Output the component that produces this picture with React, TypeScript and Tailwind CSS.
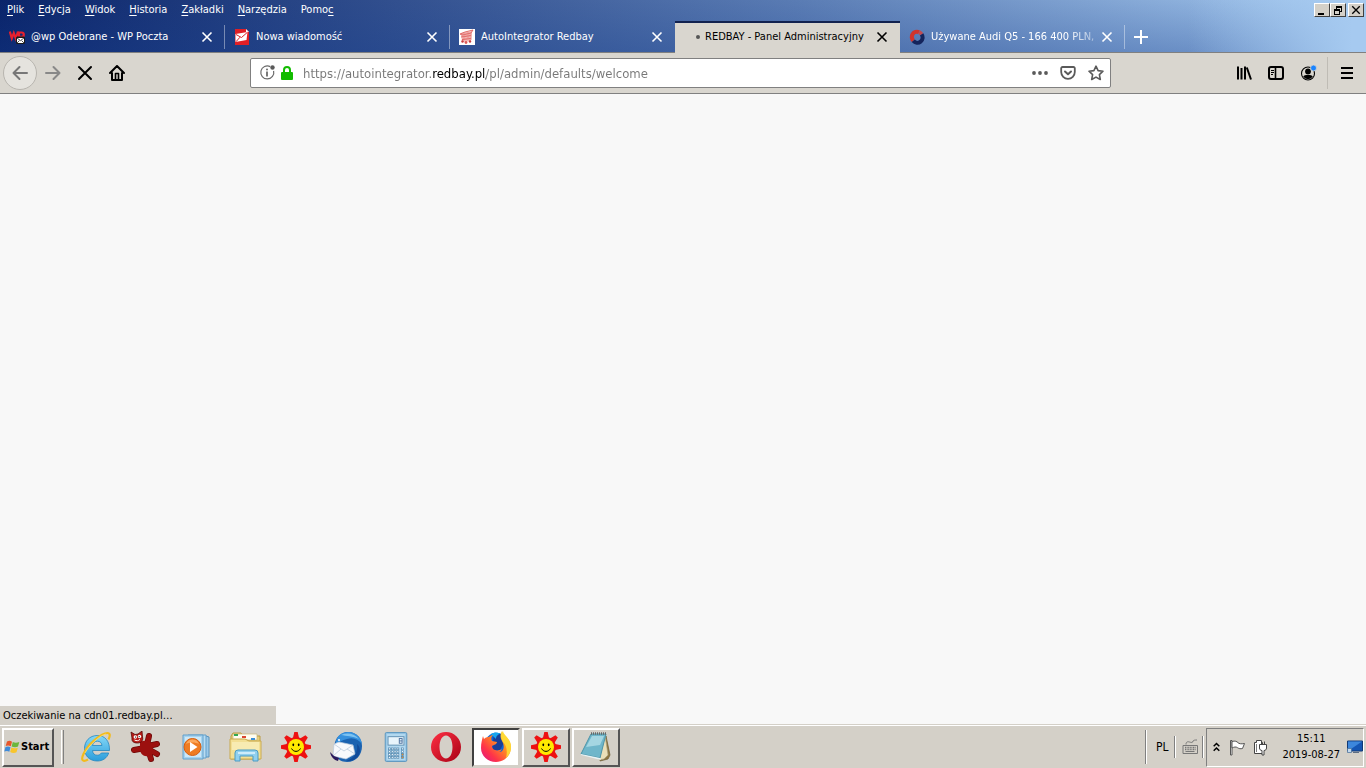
import React from 'react';
import clsx from 'clsx';

const MENU = [
  { before: '', key: 'P', after: 'lik' },
  { before: '', key: 'E', after: 'dycja' },
  { before: '', key: 'W', after: 'idok' },
  { before: '', key: 'H', after: 'istoria' },
  { before: '', key: 'Z', after: 'akładki' },
  { before: '', key: 'N', after: 'arzędzia' },
  { before: 'Pomo', key: 'c', after: '' },
];

const CloseIcon = ({ size = 12 }: { size?: number }) => (
  <svg width={size} height={size} viewBox="0 0 12 12" stroke="currentColor" strokeWidth="1.6" fill="none">
    <path d="M1.5 1.5l9 9M10.5 1.5l-9 9" />
  </svg>
);

/* ---------- tab favicons ---------- */

const WpIcon = () => (
  <svg width="16" height="16" viewBox="0 0 16 16">
    <path d="M.8 2.500L2.800 9.300L4.800 4L6.800 9.300L9 2.500" fill="none" stroke="#e8202e" strokeWidth="2.200" />
    <path d="M10 10V3.500h2.600a2.200 2.200 0 0 1 0 4.400H10" fill="none" stroke="#e8202e" strokeWidth="2.200" />
    <rect x="7" y="7.500" width="9" height="7.500" rx="1.500" fill="#1a1a1a" />
    <path d="M8 9h7v5H8z" fill="#fff" />
    <path d="M8 9l3.500 2.600L15 9M8 14l2.400-2.400M15 14l-2.400-2.400" fill="none" stroke="#222" strokeWidth=".8" />
  </svg>
);

const MailIcon = () => (
  <svg width="16" height="16" viewBox="0 0 16 16">
    <path d="M1 0h11l3 3v13H1z" fill="#e01f26" />
    <path d="M12 0l3 3h-3z" fill="#fff" />
    <path d="M1.500 5L13.500 3L12.500 11L1.500 13z" fill="#fff" />
    <path d="M2 5.500L7.500 8.500L13.300 3.400M2 12.700L6 8.200" fill="none" stroke="#e01f26" strokeWidth="1" />
  </svg>
);

const RedbayIcon = () => (
  <svg width="16" height="16" viewBox="0 0 16 16">
    <path d="M0 0h16v16H0z" fill="#fff" />
    <path d="M2 4l11-2-1 10-9 1z" fill="#f3b4b2" />
    <path d="M1 5l5-2 8-2-2 3-9 2zM2 8l10-1.500M3 10.500l9-1" fill="none" stroke="#dc5a58" strokeWidth=".9" />
    <path d="M5 4v6M9 3v7M12 3v8" stroke="#e88987" strokeWidth=".8" />
    <circle cx="3.500" cy="12.500" r="1.200" fill="#c93a3c" />
    <circle cx="11" cy="12.500" r="1.200" fill="#c93a3c" />
    <circle cx="7" cy="13.500" r="1.400" fill="#dc5a58" />
  </svg>
);

const RingIcon = () => (
  <svg width="16" height="16" viewBox="0 0 16 16" fill="none" strokeWidth="4">
    <path d="M4.300 11.700A5.200 5.200 0 0 1 10 3.200" stroke="#d0342c" />
    <path d="M12.500 5.300A5.200 5.200 0 1 1 4.300 11.700" stroke="#14245c" />
    <path d="M10 3.200A5.200 5.200 0 0 1 12.500 5.300" stroke="#c04a50" />
  </svg>
);

const tabs = [
  { title: '@wp Odebrane - WP Poczta', icon: <WpIcon /> },
  { title: 'Nowa wiadomość', icon: <MailIcon /> },
  { title: 'AutoIntegrator Redbay', icon: <RedbayIcon /> },
  { title: 'REDBAY - Panel Administracyjny', icon: null, active: true },
  { title: 'Używane Audi Q5 - 166 400 PLN,', icon: <RingIcon />, fade: true },
];

const windowButton =
  'flex h-[14px] w-4 items-center justify-center border border-white border-r-[#404040] border-b-[#404040] bg-[#d4d0c8]';

const MenuBar = () => (
  <div className="flex h-5 items-center justify-between pl-[7px] pr-[2px]">
    <nav className="flex gap-[14px]">
      {MENU.map((m) => (
        <button key={m.before + m.key + m.after} className="leading-4">
          {m.before}
          <span className="underline underline-offset-2">{m.key}</span>
          {m.after}
        </button>
      ))}
    </nav>
    <div className="flex text-black">
      <button aria-label="Minimalizuj" className={windowButton}>
        <svg width="12" height="11" viewBox="0 0 12 11"><path d="M2 8h6v2H2z" /></svg>
      </button>
      <button aria-label="Przywróć" className={windowButton}>
        <svg width="12" height="11" viewBox="0 0 12 11" fill="none" stroke="#000" shapeRendering="crispEdges">
          <path d="M4.500 4V1.500h5v4.500H8M4 2h6M2.500 4.500h5v4.500h-5zM2 5h6" />
        </svg>
      </button>
      <button aria-label="Zamknij" className={clsx('ml-[2px]', windowButton)}>
        <CloseIcon size={10} />
      </button>
    </div>
  </div>
);

const TabStrip = () => (
  <div className="flex h-[33px] items-stretch pt-px">
    {tabs.map((tab, i) => (
      <div
        key={tab.title}
        className={clsx(
          'flex min-w-0 max-w-[225px] flex-1 items-center',
          tab.active ? 'border-t-2 border-[#12224f] bg-[#d9d6cf] pb-[2px] text-black' : 'border-b border-[#808080]',
        )}
      >
        <button className="flex min-w-0 flex-1 items-center pl-[9px] text-left">
          {tab.active ? (
            <span className="ml-3 mr-[5px] flex w-1 shrink-0">
              <span className="size-1 rounded-full bg-[#555]" />
            </span>
          ) : (
            <span className="mr-[6px] shrink-0">{tab.icon}</span>
          )}
          <span
            className={clsx(
              'min-w-0 flex-1 overflow-hidden whitespace-nowrap leading-4',
              tab.fade && '[mask-image:linear-gradient(to_right,#000_80%,rgba(0,0,0,0.3))]',
            )}
          >
            {tab.title}
          </span>
        </button>
        <button aria-label="Zamknij kartę" className="mr-[11px] shrink-0">
          <CloseIcon />
        </button>
        <span className={clsx('h-6 w-px shrink-0', !tab.active && i !== 2 && 'bg-white/40')} />
      </div>
    ))}
    <div className="flex flex-1 items-center border-b border-[#808080] pl-[9px]">
      <button aria-label="Nowa karta">
        <svg width="14" height="14" viewBox="0 0 14 14" stroke="#fff" strokeWidth="2"><path d="M7 0v14M0 7h14" /></svg>
      </button>
    </div>
  </div>
);

const UrlBar = () => (
  <div className="flex h-[30px] w-[861px] min-w-0 shrink items-center rounded-[2px] border border-[#808080] bg-white pl-2 pr-[6px]">
    <svg width="18" height="18" viewBox="0 0 18 18" fill="none" stroke="#6a6a6a">
      <path d="M11.200 2.600A6.500 6.500 0 1 0 14.600 6.800" strokeWidth="1.200" />
      <path d="M8 7.500v5" strokeWidth="1.800" />
      <circle cx="8" cy="5.500" r="1" fill="#6a6a6a" stroke="none" />
      <circle cx="13.500" cy="3.500" r="2.200" fill="#5a5a5a" stroke="none" />
    </svg>
    <svg className="ml-1 shrink-0" width="12" height="14" viewBox="0 0 12 14">
      <path d="M3 7V4a3 3 0 0 1 6 0v3" fill="none" stroke="#12bc00" strokeWidth="2" />
      <rect y="6" width="12" height="8" rx="1" fill="#12bc00" />
    </svg>
    <input
      aria-label="Adres"
      defaultValue="https://autointegrator.redbay.pl/pl/admin/defaults/welcome"
      className="ml-[10px] h-5 min-w-0 flex-1 bg-[linear-gradient(to_right,#777_129px,#000_129px,#000_183px,#777_183px)] bg-clip-text text-[13px] text-transparent outline-none"
    />
    <div className="flex items-center gap-3 text-[#5a5a5a]">
      <button aria-label="Akcje strony">
        <svg width="16" height="16" viewBox="0 0 16 16" fill="currentColor">
          <circle cx="2" cy="8" r="1.900" /><circle cx="8" cy="8" r="1.900" /><circle cx="14" cy="8" r="1.900" />
        </svg>
      </button>
      <button aria-label="Pocket">
        <svg width="16" height="16" viewBox="0 0 16 16" fill="none" stroke="currentColor" strokeWidth="2" strokeLinecap="round" strokeLinejoin="round">
          <path d="M2.500 2h11a1.300 1.300 0 0 1 1.300 1.300V7a6.800 6.800 0 0 1-13.600 0V3.300A1.300 1.300 0 0 1 2.500 2z" strokeWidth="1.800" />
          <path d="M5 6.500l3 2.800 3-2.800" />
        </svg>
      </button>
      <button aria-label="Dodaj zakładkę">
        <svg width="16" height="16" viewBox="0 0 16 16" fill="none" stroke="currentColor" strokeWidth="1.600" strokeLinejoin="round">
          <path d="M8 1.200l2.100 4.400 4.900.6-3.600 3.400.9 4.900L8 12.100l-4.300 2.400.9-4.900L1 6.200l4.900-.6z" />
        </svg>
      </button>
    </div>
  </div>
);

const NavBar = () => (
  <div className="flex h-[41px] items-center border-b border-[#808080] bg-[#d9d6cf] px-[3px] text-black">
    <button aria-label="Wstecz" className="flex size-[34px] shrink-0 items-center justify-center rounded-full border border-[#b8b5af] bg-[#e5e3de] text-[#777]">
      <svg width="16" height="16" viewBox="0 0 16 16" fill="none" stroke="currentColor" strokeWidth="2" strokeLinecap="round" strokeLinejoin="round"><path d="M15 8H1.500M7.500 2L1.500 8l6 6" /></svg>
    </button>
    <button aria-label="Dalej" className="flex size-8 items-center justify-center text-[#888]">
      <svg width="16" height="16" viewBox="0 0 16 16" fill="none" stroke="currentColor" strokeWidth="2" strokeLinecap="round" strokeLinejoin="round"><path d="M1 8h13.500M8.500 2l6 6-6 6" /></svg>
    </button>
    <button aria-label="Zatrzymaj" className="flex size-8 items-center justify-center">
      <svg width="16" height="16" viewBox="0 0 16 16" stroke="#000" strokeWidth="2" strokeLinecap="round"><path d="M2 2l12 12M14 2L2 14" /></svg>
    </button>
    <button aria-label="Strona startowa" className="flex size-8 items-center justify-center">
      <svg width="16" height="16" viewBox="0 0 16 16" fill="none" stroke="#000" strokeWidth="2" strokeLinecap="round" strokeLinejoin="round">
        <path d="M1 8l7-7 7 7M3 8v7h10V8" />
        <path d="M6.500 8.500h3V15M6.500 8.500V15" strokeWidth="1.600" />
      </svg>
    </button>
    <div className="flex-1" />
    <UrlBar />
    <div className="flex-1" />
    <button aria-label="Biblioteka" className="flex size-8 items-center justify-center">
      <svg width="16" height="16" viewBox="0 0 16 16" stroke="#000" strokeWidth="2"><path d="M2 1.500v13M5.500 3v11.500M9 1.500v13M10.800 2.500l4.200 12" /></svg>
    </button>
    <button aria-label="Panele boczne" className="flex size-8 items-center justify-center">
      <svg width="16" height="16" viewBox="0 0 16 16" fill="none" stroke="#000">
        <rect x="1" y="2" width="14" height="12" rx="2" strokeWidth="2" />
        <path d="M7.500 2v12" strokeWidth="1.600" /><path d="M3 5.500h3M3 7.500h3M3 9.500h2" />
      </svg>
    </button>
    <button aria-label="Konto" className="flex size-8 items-center justify-center">
      <svg width="16" height="16" viewBox="0 0 16 16" className="overflow-visible">
        <circle cx="8" cy="8.500" r="6.500" fill="none" stroke="#000" strokeWidth="1.100" />
        <circle cx="8" cy="6.500" r="2.900" />
        <path d="M3.200 11.500c1-1.400 2.200-1.600 4.800-1.600s3.800.2 4.800 1.600A6 6 0 0 1 8 14.200a6 6 0 0 1-4.800-2.700z" />
        <circle cx="13.500" cy="3" r="3" fill="#1a84ff" stroke="#d9d6cf" strokeWidth=".8" />
      </svg>
    </button>
    <div className="mx-[3px] h-8 w-px bg-[#bfbcb5]" />
    <button aria-label="Otwórz menu" className="flex size-8 items-center justify-center">
      <svg width="12" height="12" viewBox="0 0 12 12" stroke="#000" strokeWidth="2"><path d="M0 1h12M0 6h12M0 11h12" /></svg>
    </button>
  </div>
);

/* ---------- taskbar icons ---------- */

const ExplorerE = () => (
  <svg width="32" height="32" viewBox="0 0 32 32" fill="none">
    <defs>
      <linearGradient id="ie" x1="0" y1="0" x2="0" y2="1"><stop stopColor="#84d8f8" /><stop offset="1" stopColor="#2b9ddb" /></linearGradient>
    </defs>
    <path d="M29.500 19.500H12.500c.3 3.200 2 4.700 4.700 4.700 2 0 3.300-.8 4.100-2.200h7.400c-1.600 5-5.900 8-11.400 8C9.600 30 4.500 24.800 4.500 17.500S9.700 4.500 17.200 4.500c8 0 12.600 5.700 12.300 15zM22 14.500c-.3-2.700-2-4.300-4.600-4.300-2.700 0-4.400 1.600-4.900 4.300z" fill="url(#ie)" stroke="#2486bf" strokeWidth=".8" />
    <path d="M28.500 8.500c2-4 1.500-6.500-1-6.500C21 2 8 13.500 3.500 23c-2.800 6-1 8.500 4.500 5.500" stroke="#f3bb1c" strokeWidth="2.200" />
    <path d="M26 3C20 4 9 14.500 5 22" stroke="#fbe27a" strokeWidth=".8" />
  </svg>
);

const SplatCat = () => (
  <svg width="32" height="32" viewBox="0 0 32 32">
    <g fill="none" stroke="#6d0908" strokeWidth="6" strokeLinecap="round">
      <path d="M17 14L19 5M18 15l9-2M18 18l3 10M18 18l9 5M15 17L4 19" />
    </g>
    <g fill="none" stroke="#9c100f" strokeWidth="4.600" strokeLinecap="round">
      <path d="M17 14L19 5M18 15l9-2M18 18l3 10M18 18l9 5M15 17L4 19" />
    </g>
    <path d="M10 11c4-2 10-2 12 2s0 11-4 12-8-2-8-7z" fill="#9c100f" />
    <path d="M1 1l4 2.500L8 3l4-3 .5 6c1 3-1 6-5 6S1.500 10.500 2 7z" fill="#b81c18" stroke="#570605" strokeWidth=".8" />
    <circle cx="5.300" cy="6" r="1.700" fill="#fff" /><circle cx="9.500" cy="5.500" r="1.700" fill="#fff" />
    <circle cx="5.500" cy="6" r=".6" /><circle cx="9.200" cy="5.600" r=".6" />
    <path d="M4.500 9c2 1 4 1 5.500-.7" stroke="#fff" fill="none" />
  </svg>
);

const MediaPlayer = () => (
  <svg width="32" height="32" viewBox="0 0 32 32">
    <path d="M12 5h14l3 1v20H12z" fill="#9cc9e8" stroke="#5a93bc" />
    <path d="M8 4h18v23H8z" fill="#b9dcf2" stroke="#62a0cb" />
    <path d="M3 4h20v24H3z" fill="#a6d3ef" stroke="#62a0cb" />
    <path d="M5 6h16v20H5z" fill="#cde8f7" />
    <circle cx="12.500" cy="16" r="8.500" fill="#ef7c22" stroke="#d75d0d" />
    <path d="M6 13a7 7 0 0 1 13 0c-4-2-9-2-13 0z" fill="#ffb36a" opacity=".8" />
    <path d="M10 11l7.500 5-7.500 5z" fill="#fff" />
  </svg>
);

const Folder = () => (
  <svg width="34" height="32" viewBox="0 0 34 32">
    <path d="M2 5l2-3h8l2 3h17v23H2z" fill="#e7cf7c" stroke="#ba9b45" />
    <path d="M4 3h24v6H4z" fill="#fffdf1" stroke="#c9b67a" strokeWidth=".7" />
    <path d="M5 3h4v2H5z" fill="#33a852" /><path d="M13 5h4v2h-4z" fill="#dc4632" /><path d="M22 7h4v2h-4z" fill="#3a8ed8" />
    <path d="M1 8h15l4 2h12v18H1z" fill="#f3df94" stroke="#c9aa50" />
    <path d="M3 11h27v8H3z" fill="#fcf3c6" opacity=".6" />
    <path d="M6 30v-8a3 3 0 0 1 3-3h17a3 3 0 0 1 3 3v8h-5v-5H11v5z" fill="#91d0ee" stroke="#4a9bc4" />
    <path d="M9 22h17" stroke="#e2f6ff" strokeWidth="1.500" />
  </svg>
);

const SunFace = () => (
  <svg width="30" height="30" viewBox="0 0 30 30">
    <g fill="#ee1111">
      {[0, 45, 90, 135, 180, 225, 270, 315].map((a) => (
        <path key={a} d="M13.300 0h3.400l1.800 8h-7z" transform={`rotate(${a} 15 15)`} />
      ))}
      <circle cx="15" cy="15" r="10" />
    </g>
    <circle cx="15" cy="15" r="8" fill="#ffe900" />
    <ellipse cx="12.300" cy="12.800" rx=".9" ry="1.400" /><ellipse cx="17.700" cy="12.800" rx=".9" ry="1.400" />
    <path d="M10.500 16.500c2 3.800 7 3.800 9 0" fill="none" stroke="#000" strokeWidth="1" />
  </svg>
);

const Thunderbird = () => (
  <svg width="34" height="32" viewBox="0 0 34 32">
    <path d="M17 1C27 0 33 7 33 15c0 9-6 16-15 16-6 0-9-3-11-6C3 17 5 4 17 1z" fill="#1a62b0" />
    <path d="M7 14C6 6 12 0 21 1c7 1 11 6 12 12-4-5-9-7-15-5-5 1-8 3-11 6z" fill="#3590dd" />
    <path d="M12 4c7-3 14-1 18 4-6-3-13-3-18-4z" fill="#7cc2f1" />
    <path d="M5 13l5-2 14 3 2 9-9 5-13-3z" fill="#f8f9fc" stroke="#b9c9db" strokeWidth=".7" />
    <path d="M5 13l10 7 9-6M4 25l8-7M26 23l-8-5" fill="none" stroke="#bccbdc" strokeWidth=".8" />
    <path d="M17 30c9-3 12-9 11-17 6 5 3 18-11 17z" fill="#124b99" />
    <path d="M1 21l4 4 5 2-1 3C5 29 2 26 1 21z" fill="#2a195c" />
    <circle cx="10" cy="9" r="1" fill="#fff" />
  </svg>
);

const Calculator = () => (
  <svg width="24" height="30" viewBox="0 0 24 32">
    <rect x=".5" y=".5" width="23" height="31" rx="1.500" fill="#8fc1e2" stroke="#5a95bf" />
    <rect x="2" y="2" width="20" height="28" fill="#b2d8ef" />
    <rect x="3.500" y="5" width="17" height="9" fill="#e8f4fb" stroke="#5d8db0" />
    <rect x="15.500" y="7" width="3" height="5" fill="none" stroke="#4b6f9e" /><path d="M15.500 9.500h3" stroke="#4b6f9e" />
    {[17, 20, 23, 26].map((y) =>
      [4, 7, 10, 13, 18].map((x) => (
        <rect key={`${x}-${y}`} x={x} y={y} width="2" height="2" fill={x === 18 && y > 22 ? '#ef8d25' : '#fff'} stroke="#4d83ab" strokeWidth=".7" />
      )),
    )}
  </svg>
);

const Opera = () => (
  <svg width="32" height="32" viewBox="0 0 32 32">
    <defs>
      <linearGradient id="op" x1="0" y1="0" x2="1" y2="1"><stop stopColor="#ff3044" /><stop offset="1" stopColor="#a70014" /></linearGradient>
    </defs>
    <path fillRule="evenodd" d="M16 1a15 15 0 1 0 0 30 15 15 0 0 0 0-30zm0 3.500c4 0 6.500 5 6.500 11.500S20 27.500 16 27.500 9.500 22.500 9.500 16 12 4.500 16 4.500z" fill="url(#op)" />
  </svg>
);

const Firefox = () => (
  <svg width="32" height="32" viewBox="0 0 32 32">
    <defs>
      <linearGradient id="ff" x1="1" y1="0" x2="0" y2="1"><stop stopColor="#fff44f" /><stop offset=".35" stopColor="#ff9a1c" /><stop offset=".7" stopColor="#ff3548" /><stop offset="1" stopColor="#dc118c" /></linearGradient>
    </defs>
    <circle cx="16" cy="13" r="11" fill="#0b64d8" />
    <path d="M14 2c5-1 11 2 11 8l-5 9-8 1z" fill="#183f98" />
    <path d="M11 3c3-2 7-2 10 0-3 0-5 2-5 5z" fill="#18a6ef" />
    <path d="M3 5l1 3c2-2 4-2 5-2 1-1 2-2 4-2-2 2-2 4-1 6l5 1c0 2-3 3-5 4 0 4 5 6 10 3-1 2-2 3-3 3 5 0 6-6 3-11-2-3-2-7 0-10 1 4 9 7 9 16 0 9-7 15-15 15S1 25 1 17c0-5 1-8 2-12z" fill="url(#ff)" />
    <path d="M21 5c0-2 1-4 2-5 1 5 8 8 8 16 0 5-2 8-5 11 2-8 0-13-3-16-1-2-2-4-2-6z" fill="#ffdb36" opacity=".9" />
  </svg>
);

const Notepad = () => (
  <svg width="32" height="32" viewBox="0 0 32 32">
    <path d="M26 5l4 19-2 4-8 2z" fill="#8f7842" stroke="#6b5a30" strokeWidth=".7" />
    <path d="M25 4l3 20-4 4-5 1z" fill="#eadfb8" stroke="#a8a080" strokeWidth=".6" />
    <path d="M11 3h15l-6 24L1 23z" fill="#6fb6ca" stroke="#4b94a8" />
    <path d="M12 5h12l-4 9-14 2z" fill="#bce4ec" opacity=".7" />
    <path d="M11 2.500h15" stroke="#686868" strokeWidth="2.500" strokeDasharray="1 1" />
    <path d="M1 23l19 4 1 2-20-5z" fill="#e8f3f5" />
  </svg>
);

const WindowsFlag = () => (
  <svg width="16" height="16" viewBox="0 0 16 16">
    <path d="M3 2.500c2-1 3.500-.8 5 .2L6.800 7.300C5 6.300 3.500 6.300 1.700 7z" fill="#e8572b" />
    <path d="M8.800 3c2 1 4 1 6.500 0L14 7.600c-2 1-4.500.8-6.400-.1z" fill="#6cb73d" />
    <path d="M1.500 8c2-.8 3.400-.7 5 .2L5.300 12.700C3.800 11.700 2 11.800.3 12.500z" fill="#3f8bd9" />
    <path d="M7.400 8.600c2 .9 4 1 6.400.1l-1.300 4.600c-2 1-4.300.8-6.300-.2z" fill="#f8c52c" />
  </svg>
);

const quickLaunch = [
  { name: 'Internet Explorer', icon: <ExplorerE /> },
  { name: 'IrfanView', icon: <SplatCat /> },
  { name: 'Windows Media Player', icon: <MediaPlayer /> },
  { name: 'Eksplorator Windows', icon: <Folder /> },
  { name: 'Gadu-Gadu', icon: <SunFace /> },
  { name: 'Thunderbird', icon: <Thunderbird /> },
  { name: 'Kalkulator', icon: <Calculator /> },
  { name: 'Opera', icon: <Opera /> },
];

const Divider = ({ className }: { className?: string }) => (
  <span className={clsx('w-[2px] border-l border-[#808080] border-r border-r-white', className)} />
);

const Tray = () => (
  <div className="flex items-center pr-[2px]">
    <Divider className="h-[34px]" />
    <span className="ml-[9px] mr-[6px] text-xs">PL</span>
    <Divider className="h-[22px]" />
    <svg className="ml-[6px] mr-[3px]" width="17" height="16" viewBox="0 0 17 16" fill="none" stroke="#777">
      <path d="M1 6.500h14.500v8H1z" />
      <path d="M3 8.500h11M3 10.500h11" strokeWidth="1.300" strokeDasharray="1 .6" /><path d="M3.500 12.500h9" />
      <path d="M4 5.500c0-3 2-3 3.500-2.500S11 4 11 2c1-1 2-1 4-1" />
    </svg>
    <Divider className="mr-[2px] h-[22px]" />
    <div className="flex h-[39px] items-center border border-[#808080] border-r-white border-b-white pl-[6px]">
      <button aria-label="Pokaż ukryte ikony">
        <svg width="7" height="10" viewBox="0 0 7 10" fill="none" stroke="#000" strokeWidth="1.500"><path d="M.7 4.300l2.800-2.800 2.800 2.800M.7 8.800L3.500 6l2.800 2.800" /></svg>
      </button>
      <svg className="ml-[9px]" width="17" height="17" viewBox="0 0 17 17" fill="#fff" stroke="#555">
        <path d="M1.500 1.500h1.500v14.500H1.500z" />
        <path d="M3 2.500c3-1 5 0 6 1.200 1 1 3 1.500 6.500.8l-2 5c-2 .5-3.500.2-5-.8C7 7.500 5 8 3 9z" />
      </svg>
      <svg className="ml-[7px]" width="16" height="17" viewBox="0 0 16 17" fill="#fff" stroke="#444">
        <path d="M1.500 3.500h2v-2h5v2h1v11h-8z" />
        <path d="M3.500 5v8" strokeWidth=".7" />
        <path d="M6.500 5.500h7V9c0 1.500-1 2.500-2.500 2.500v4.500H9v-4.500c-1.500 0-2.500-1-2.500-2.500zM8.500 5.500V2.500M11.500 5.500V2.500" />
      </svg>
      <div className="ml-[13px] text-center leading-4">
        <div>15:11</div>
        <div>2019-08-27</div>
      </div>
      <svg className="ml-[7px]" width="16" height="14" viewBox="0 0 16 14">
        <path d="M.5 1h15v10H.5z" fill="#1556b4" stroke="#123974" />
        <path d="M1 1.500h14L4 9H1z" fill="#3d87dc" />
        <path d="M.5 8.500h4v4h-4z" fill="#c3d8ed" stroke="#426b96" strokeWidth=".7" /><path d="M6 12h6v1H6z" fill="#5c6d83" />
      </svg>
    </div>
  </div>
);

const raised = 'border-2 border-white border-r-[#555] border-b-[#555] bg-[#d4d0c8]';

const Taskbar = () => (
  <footer className="flex h-11 shrink-0 items-center border-t border-[#d4d0c8] bg-[#d4d0c8] pl-[2px] pt-px text-black shadow-[inset_0_1px_0_#fff]">
    <button className={clsx('flex h-[39px] w-[52px] items-center gap-px font-bold', raised)}>
      <WindowsFlag />
      Start
    </button>
    <span className="mx-[7px] h-[34px] w-[3px] border-l border-r border-white border-r-[#808080]" />
    {quickLaunch.map((q) => (
      <button key={q.name} aria-label={q.name} className="flex w-[50px] items-center justify-center">
        {q.icon}
      </button>
    ))}
    <div className="ml-px flex flex-1 gap-[2px]">
      <button aria-label="Firefox" className="flex h-[39px] w-12 items-center justify-center border-2 border-[#404040] border-r-[#d4d0c8] border-b-[#d4d0c8] bg-white">
        <Firefox />
      </button>
      <button aria-label="Okno Gadu-Gadu" className={clsx('flex h-[39px] w-12 items-center justify-center', raised)}>
        <SunFace />
      </button>
      <button aria-label="Notatnik" className={clsx('flex h-[39px] w-12 items-center justify-center', raised)}>
        <Notepad />
      </button>
    </div>
    <Tray />
  </footer>
);

const App = () => {
  return (
    <div className="flex h-screen flex-col overflow-hidden bg-[#f8f8f8] font-['DejaVu_Sans_Condensed','DejaVu_Sans',sans-serif] text-[11px] text-white">
      <header className="shrink-0">
        <div className="bg-[linear-gradient(to_right,transparent_87%,#a6caf0_99%),linear-gradient(to_bottom,transparent,rgba(20,60,140,0.3)),linear-gradient(100deg,#0a246a,#5a7cb4_58%,#a6caf0)]">
          <MenuBar />
          <TabStrip />
        </div>
        <NavBar />
      </header>
      <main className="relative flex-1">
        <div className="absolute bottom-0 left-0 h-[18px] w-[276px] bg-[#d4d0c8] pl-[3px] leading-5 text-black">
          Oczekiwanie na cdn01.redbay.pl…
        </div>
      </main>
      <Taskbar />
    </div>
  );
};

export default App;
